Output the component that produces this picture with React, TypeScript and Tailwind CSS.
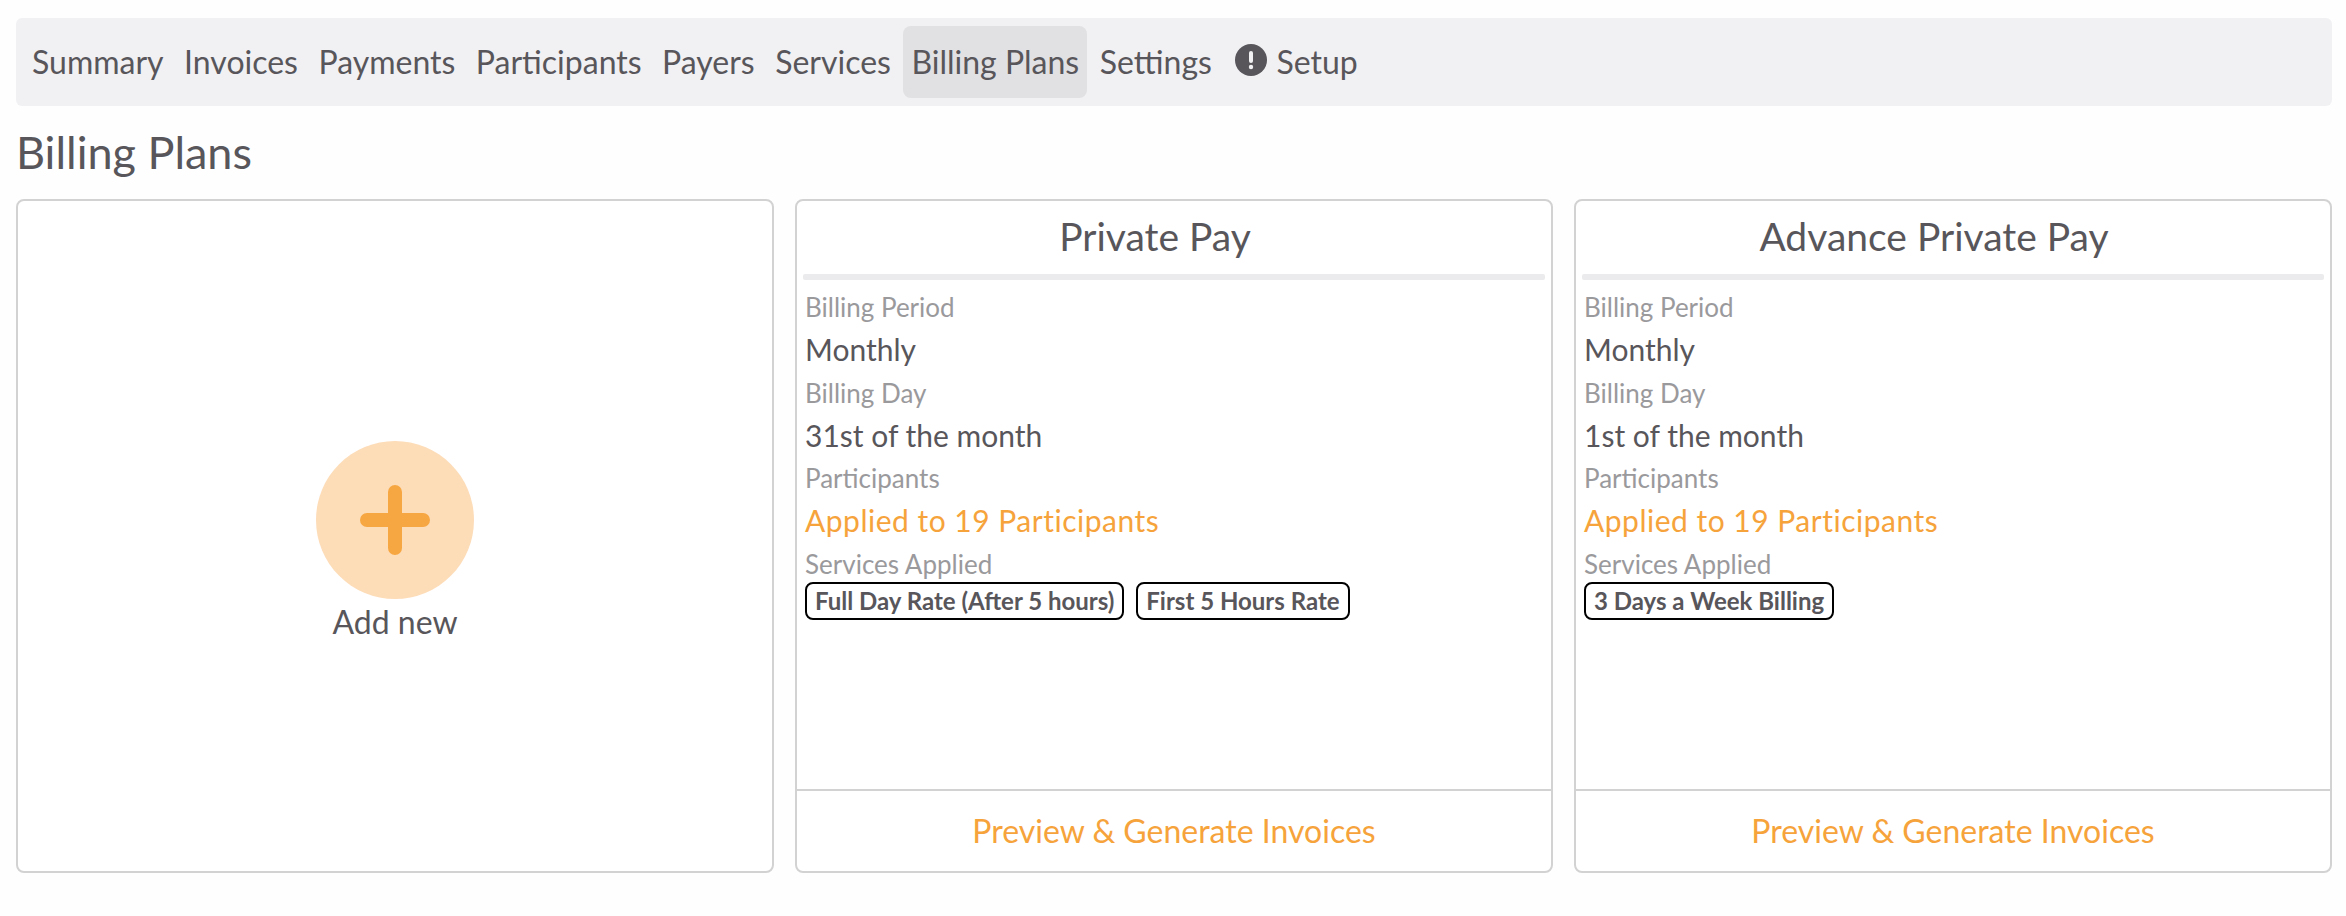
const navItems = ["Summary", "Invoices", "Payments", "Participants", "Payers", "Services", "Billing Plans", "Settings"];

const plans = [
  { name: "Private Pay", day: "31st of the month", services: ["Full Day Rate (After 5 hours)", "First 5 Hours Rate"] },
  { name: "Advance Private Pay", day: "1st of the month", services: ["3 Days a Week Billing"] },
];

const Label = ({ children }: { children: React.ReactNode }) => (
  <div className="h-[42px] text-[26px] leading-[42px] text-[#9a999c]">{children}</div>
);

const Value = ({ children, orange }: { children: React.ReactNode; orange?: boolean }) => (
  <div className={`h-[43.5px] text-[30px] leading-[43.5px] ${orange ? "tracking-[0.5px] text-[#f6a33b]" : "text-[#58565a]"}`}>{children}</div>
);

const PlanCard = ({ plan }: { plan: (typeof plans)[number] }) => (
  <div className="flex flex-col rounded-[8px] border-2 border-[#d2d2d2] bg-white">
    <div className="flex h-[73px] items-center justify-center pb-[3px] pr-[38px] text-[39px] text-[#58565a]">{plan.name}</div>
    <div className="mx-[6px] h-[6px] rounded-[2px] bg-[#ebebed]" />
    <div className="flex-1 px-[8px] pt-[6px]">
      <Label>Billing Period</Label>
      <Value>Monthly</Value>
      <Label>Billing Day</Label>
      <Value>{plan.day}</Value>
      <Label>Participants</Label>
      <Value orange>Applied to 19 Participants</Value>
      <Label>Services Applied</Label>
      <div className="-mt-[2.5px] flex gap-[12px]">
        {plan.services.map((s) => (
          <span key={s} className="flex h-[38px] items-center rounded-[8px] border-2 border-black px-[8px] text-[24px] font-bold text-[#58565a]">
            {s}
          </span>
        ))}
      </div>
    </div>
    <div className="flex h-[82px] items-center justify-center border-t-2 border-[#d2d2d2] text-[32px] text-[#f6a33b]">
      Preview &amp; Generate Invoices
    </div>
  </div>
);

export default function App() {
  return (
    <div className="h-[916px] bg-[#fefefe] px-[16px] pt-[18px] pr-[14px] font-['Lato','Open_Sans',sans-serif]">
      <nav className="flex h-[88px] items-center gap-[4.5px] rounded-[6px] bg-[#f1f0f3] px-[8px] text-[32px] text-[#58565a]">
        {navItems.map((item) => (
          <a key={item} className={`flex h-[72px] items-center rounded-[8px] px-[8px] ${item === "Billing Plans" ? "bg-[#e1e0e3]" : ""}`}>
            {item}
          </a>
        ))}
        <a className="ml-[3px] flex h-[72px] items-center gap-[9px] px-[8px]">
          <svg width="32" height="32" viewBox="0 0 32 32" className="-mt-[4px]">
            <circle cx="16" cy="16" r="16" fill="#58565a" />
            <rect x="14" y="7" width="4" height="12" rx="2" fill="#f1f0f3" />
            <circle cx="16" cy="23" r="2.2" fill="#f1f0f3" />
          </svg>
          Setup
        </a>
      </nav>
      <h1 className="flex h-[93px] items-center text-[45px] text-[#58565a]">Billing Plans</h1>
      <div className="grid h-[674px] grid-cols-3 gap-[21px]">
        <div className="flex flex-col items-center justify-center rounded-[8px] border-2 border-[#d2d2d2] bg-white pt-[9px]">
          <div className="flex h-[158px] w-[158px] items-center justify-center rounded-full bg-[#fddcb8]">
            <svg width="70" height="70" viewBox="0 0 70 70">
              <path d="M35 7v56M7 35h56" stroke="#f7a742" strokeWidth="14" strokeLinecap="round" />
            </svg>
          </div>
          <div className="mt-[5px] text-[32px] leading-[36px] text-[#58565a]">Add new</div>
        </div>
        {plans.map((p) => (
          <PlanCard key={p.name} plan={p} />
        ))}
      </div>
    </div>
  );
}
